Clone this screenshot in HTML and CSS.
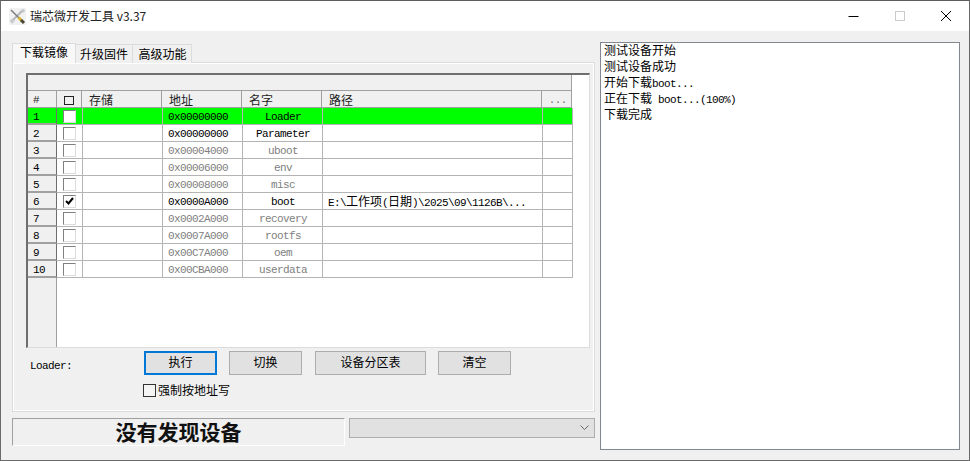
FILE: index.html
```html
<!DOCTYPE html>
<html lang="zh-CN">
<head>
<meta charset="utf-8">
<title>瑞芯微开发工具 v3.37</title>
<link rel="stylesheet" href="styles.css">
</head>
<body>
<div class="window">
  <header class="titlebar">
    <svg class="app-icon" width="17" height="17" viewBox="0 0 17 17">
      <rect x="0" y="0" width="17" height="17" rx="1" fill="#f1f1f1"/>
      <path d="M14 2 L4 12" stroke="#b4b8bc" stroke-width="2.2"/>
      <path d="M4.5 11.5 L2 14.5" stroke="#c8ccd0" stroke-width="3.6"/>
      <path d="M15 1 L12 2 L14 5 L16 3 Z" fill="#c4c8cc"/>
      <path d="M2 2 L10 10" stroke="#7c7f82" stroke-width="1.6"/>
      <path d="M9.5 9.5 L12.5 12.5" stroke="#d8b42c" stroke-width="3"/>
      <path d="M12 12 L15 15" stroke="#4a4530" stroke-width="3"/>
    </svg>
    <span class="title-text">瑞芯微开发工具 v3.37</span>
    <div class="win-controls">
      <svg class="ctl" width="46" height="30" viewBox="0 0 46 30"><path d="M17.5 15.5 H27.5" stroke="#000"/></svg>
      <svg class="ctl" width="46" height="30" viewBox="0 0 46 30"><rect x="18.5" y="10.5" width="9" height="9" fill="none" stroke="#ccc"/></svg>
      <svg class="ctl" width="46" height="30" viewBox="0 0 46 30"><path d="M18 10 L28 20 M28 10 L18 20" stroke="#000" fill="none"/></svg>
    </div>
  </header>
  <main class="content">
    <section class="left">
      <nav class="tabs">
        <div class="tab active">下载镜像</div>
        <div class="tab second">升级固件</div>
        <div class="tab third">高级功能</div>
      </nav>
      <div class="panel">
        <div class="list">
          <div class="list-bar"></div>
          <div class="grid head">
            <div class="hd num">#</div>
            <div class="hd chk"><span class="hd-box"></span></div>
            <div class="hd">存储</div>
            <div class="hd">地址</div>
            <div class="hd">名字</div>
            <div class="hd">路径</div>
            <div class="hd dots">...</div>
          </div>
          <div class="grid body-rows">
            <div class="rn sel">1</div><div class="c cb sel"><span class="box"></span></div><div class="c sel"></div><div class="c addr sel">0x00000000</div><div class="c name sel">Loader</div><div class="c sel"></div><div class="c sel"></div>
            <div class="rn">2</div><div class="c cb"><span class="box"></span></div><div class="c"></div><div class="c addr">0x00000000</div><div class="c name">Parameter</div><div class="c"></div><div class="c"></div>
            <div class="rn">3</div><div class="c cb"><span class="box"></span></div><div class="c"></div><div class="c addr off">0x00004000</div><div class="c name off">uboot</div><div class="c"></div><div class="c"></div>
            <div class="rn">4</div><div class="c cb"><span class="box"></span></div><div class="c"></div><div class="c addr off">0x00006000</div><div class="c name off">env</div><div class="c"></div><div class="c"></div>
            <div class="rn">5</div><div class="c cb"><span class="box"></span></div><div class="c"></div><div class="c addr off">0x00008000</div><div class="c name off">misc</div><div class="c"></div><div class="c"></div>
            <div class="rn">6</div><div class="c cb"><span class="box"><svg width="11" height="11" viewBox="0 0 11 11"><path d="M2 5 L4.5 7.5 L9 2" fill="none" stroke="#000" stroke-width="2"/></svg></span></div><div class="c"></div><div class="c addr">0x0000A000</div><div class="c name">boot</div><div class="c path"><span class="lat">E:\</span><span class="cjk">工作项</span><span class="lat">(</span><span class="cjk">日期</span><span class="lat">)\2025\09\1126B\...</span></div><div class="c"></div>
            <div class="rn">7</div><div class="c cb"><span class="box"></span></div><div class="c"></div><div class="c addr off">0x0002A000</div><div class="c name off">recovery</div><div class="c"></div><div class="c"></div>
            <div class="rn">8</div><div class="c cb"><span class="box"></span></div><div class="c"></div><div class="c addr off">0x0007A000</div><div class="c name off">rootfs</div><div class="c"></div><div class="c"></div>
            <div class="rn">9</div><div class="c cb"><span class="box"></span></div><div class="c"></div><div class="c addr off">0x00C7A000</div><div class="c name off">oem</div><div class="c"></div><div class="c"></div>
            <div class="rn">10</div><div class="c cb"><span class="box"></span></div><div class="c"></div><div class="c addr off">0x00CBA000</div><div class="c name off">userdata</div><div class="c"></div><div class="c"></div>
          </div>
          <div class="rest"><div class="rest-side"></div></div>
        </div>
        <div class="actions">
          <span class="loader-label">Loader:</span>
          <button class="btn b-exec">执行</button>
          <button class="btn b-switch">切换</button>
          <button class="btn b-table">设备分区表</button>
          <button class="btn b-clear">清空</button>
        </div>
        <label class="force"><span class="force-box"></span>强制按地址写</label>
      </div>
      <div class="status-row">
        <div class="status">没有发现设备</div>
        <div class="select">
          <svg width="9" height="6" viewBox="0 0 9 6"><path d="M0.5 0.5 L4.5 4.5 L8.5 0.5" fill="none" stroke="#666" stroke-width="1"/></svg>
        </div>
      </div>
    </section>
    <aside class="log">
      <div class="log-line">测试设备开始</div>
      <div class="log-line">测试设备成功</div>
      <div class="log-line">开始下载<span class="lat">boot...</span></div>
      <div class="log-line">正在下载<span class="lat"> boot...(100%)</span></div>
      <div class="log-line">下载完成</div>
    </aside>
  </main>
</div>
</body>
</html>
```
FILE: styles.css
```css
* { box-sizing: border-box; }
html, body { margin: 0; padding: 0; }
body {
  width: 970px;
  height: 461px;
  overflow: hidden;
  font-family: "Noto Sans CJK SC", "Liberation Sans", sans-serif;
  font-size: 12px;
  color: #000;
  background: #f0f0f0;
}
.window {
  width: 970px;
  height: 461px;
  border: 1px solid #6a6a6a;
  border-top-color: #5c5c5c;
  display: flex;
  flex-direction: column;
  background: #f0f0f0;
}
.titlebar {
  height: 30px;
  flex: none;
  background: #fff;
  display: flex;
  align-items: center;
  padding-left: 8px;
}
.app-icon { flex: none; margin-right: 4px; }
.title-text { font-size: 12px; line-height: 30px; color: #222; }
.win-controls { margin-left: auto; display: flex; }
.ctl { display: block; }

.content {
  flex: 1;
  display: flex;
  padding: 11px 10px 10px 11px;
  gap: 5px;
}
.left { width: 583px; flex: none; display: flex; flex-direction: column; }

.tabs { display: flex; height: 20px; padding-top: 1px; position: relative; z-index: 1; }
.tab {
  height: 19px;
  margin-top: 1px;
  line-height: 17px;
  background: #f0f0f0;
  border: 1px solid #dcdcdc;
  border-left: 0;
  border-bottom: 0;
  text-align: center;
}
.tab.active {
  width: 64px;
  height: 20px;
  margin-top: 0;
  line-height: 16px;
  border-left: 1px solid #dcdcdc;
  background: #f8f8f8;
  margin-bottom: -1px;
}
.second { width: 57px; }
.third { width: 59px; padding-left: 1px; }

.panel {
  height: 350px;
  flex: none;
  border: 1px solid #dcdcdc;
  box-shadow: inset 1px 1px 0 #fff, inset -1px -1px 0 #fff;
  padding: 10px 5px 0 13px;
  display: flex;
  flex-direction: column;
}
.list {
  width: 564px;
  height: 275px;
  flex: none;
  border-top: 2px solid #6e6e6e;
  border-left: 2px solid #6e6e6e;
  border-right: 1px solid #dcdcdc;
  border-bottom: 1px solid #dcdcdc;
  background: #fff;
  display: flex;
  flex-direction: column;
}
.list-bar {
  width: 544px;
  height: 16px;
  flex: none;
  background: #f0f0f0;
  border-right: 1px solid #a0a0a0;
  border-bottom: 1px solid #a0a0a0;
}
.grid {
  display: grid;
  flex: none;
  grid-auto-rows: 17px;
}
.grid.head {
  width: 544px;
  grid-template-columns: 29px 25px 80px 80px 80px 220px 30px;
}
.grid.body-rows {
  width: 545px;
  grid-template-columns: 29px 26px 80px 80px 80px 220px 30px;
}
.hd {
  background: #f0f0f0;
  border-right: 1px solid #a0a0a0;
  border-bottom: 1px solid #a0a0a0;
  padding-left: 7px;
  line-height: 18px;
  color: #222;
}
.hd.num { padding-left: 5px; font-family: "Liberation Mono", monospace; font-size: 11px; letter-spacing: -0.6px; }
.hd.chk { padding: 5px 0 0 7px; }
.hd-box { display: block; width: 10px; height: 9px; border: 1px solid #222; }
.hd.dots { padding: 1px 0 0 7px; color: #666; font-family: "Liberation Mono", monospace; font-size: 10px; }

.rn {
  background: #f0f0f0;
  border-right: 1px solid #6e6e6e;
  border-bottom: 2px solid #a0a0a0;
  padding-left: 5px;
  font-family: "Liberation Mono", monospace;
  font-size: 11px;
  letter-spacing: -0.6px;
  line-height: 18px;
}
.rn.sel { background: #0f0; }
.c {
  background: #fff;
  border-right: 1px solid #b4b4b4;
  border-bottom: 1px solid #b4b4b4;
  font-family: "Liberation Mono", monospace;
  font-size: 11px;
  letter-spacing: -0.6px;
  line-height: 19px;
  white-space: nowrap;
}
.c.sel { background: #0f0; }
.addr { padding-left: 5px; }
.name { text-align: center; padding-left: 1px; }
.off { color: #808080; }
.path { padding-left: 5px; overflow: hidden; }
.lat { font-family: "Liberation Mono", monospace; font-size: 11px; letter-spacing: -0.6px; }
.cjk { font-family: "Noto Sans CJK SC", sans-serif; font-size: 12px; letter-spacing: 0; line-height: 16px; }
.cb { padding: 2px 0 0 6px; }
.box {
  display: block;
  width: 13px;
  height: 13px;
  background: #fff;
  border: 1px solid #dcdcdc;
  border-top-color: #808080;
  border-left-color: #808080;
}
.box svg { display: block; }

.rest { flex: 1; }
.rest-side { width: 29px; height: 100%; background: #f0f0f0; border-right: 1px solid #a0a0a0; }

.actions {
  height: 24px;
  margin-top: 3px;
  flex: none;
  display: flex;
  align-items: center;
  padding-left: 4px;
}
.loader-label {
  width: 114px;
  flex: none;
  font-family: "Liberation Mono", monospace;
  font-size: 11px;
  letter-spacing: -0.6px;
  padding-top: 5px;
}
.btn {
  height: 24px;
  padding: 0 0 3px;
  font: 12px "Noto Sans CJK SC", sans-serif;
  color: #000;
  background: #e1e1e1;
  border: 1px solid #adadad;
  flex: none;
}
.b-exec { width: 73px; border: 2px solid #0078d7; margin-right: 12px; }
.b-switch { width: 73px; margin-right: 13px; }
.b-table { width: 111px; margin-right: 12px; }
.b-clear { width: 73px; }

.force {
  display: flex;
  align-items: center;
  margin: 8px 0 0 117px;
  height: 14px;
  line-height: 14px;
}
.force-box {
  width: 13px;
  height: 13px;
  margin-right: 2px;
  border: 1px solid #333;
  background: #f4f4f4;
}

.status-row { display: flex; gap: 4px; margin-top: 6px; }
.status {
  width: 333px;
  height: 28px;
  flex: none;
  border-top: 1px solid #a0a0a0;
  border-left: 1px solid #a0a0a0;
  border-right: 1px solid #fff;
  border-bottom: 1px solid #fff;
  text-align: center;
  font-size: 21px;
  font-weight: 700;
  line-height: 24px;
  color: #111;
}
.select {
  width: 246px;
  height: 20px;
  flex: none;
  background: #e1e1e1;
  border: 1px solid #adadad;
  display: flex;
  align-items: center;
  justify-content: flex-end;
  padding-right: 5px;
}
.log {
  width: 360px;
  height: 408px;
  flex: none;
  background: #fff;
  border: 1px solid #828790;
  padding: 0 3px;
}
.log-line { height: 16px; line-height: 14px; white-space: pre; }
```
